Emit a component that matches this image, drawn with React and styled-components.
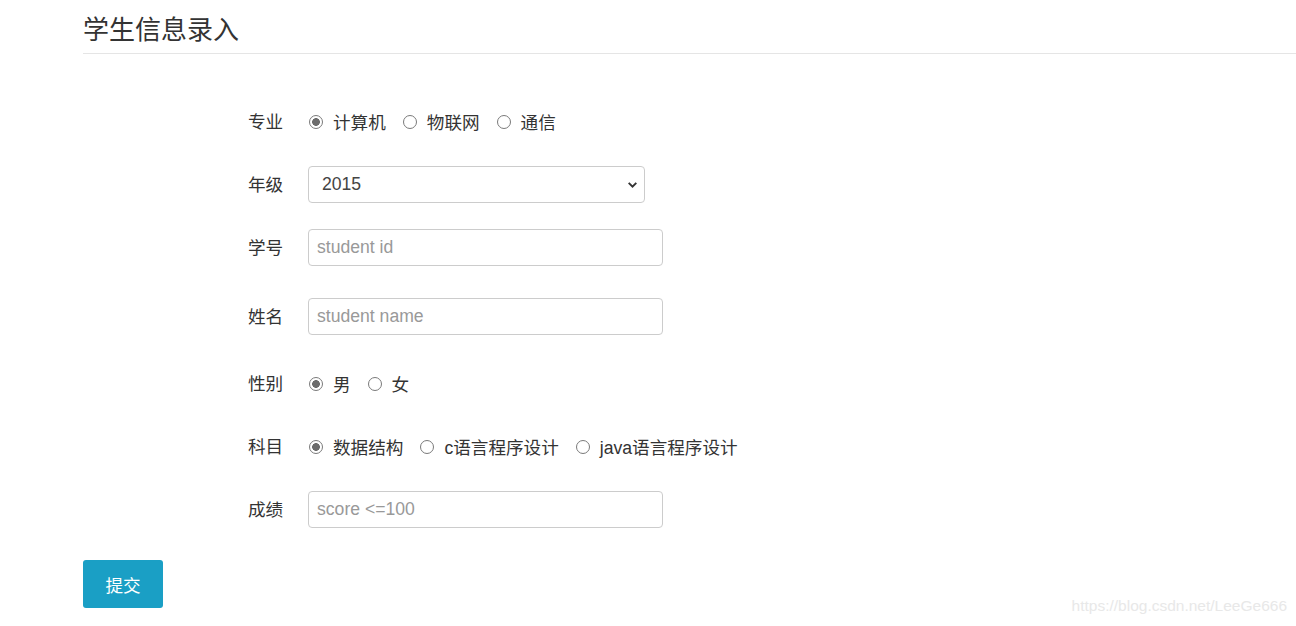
import React from "react";
import styled, {createGlobalStyle} from "styled-components";

const GlobalStyle = createGlobalStyle`
  html, body {
    margin: 0;
    padding: 0;
    background: #fff;
  }
  body {
    font-family: "Liberation Sans", "Noto Sans CJK SC", Arial, sans-serif;
    color: #333;
    font-size: 17.6px;
  }
`;

const rows = [
    {label: "专业", type: "radio", name: "major", options: ["计算机", "物联网", "通信"], gap: 25},
    {label: "年级", type: "select", value: "2015", gap: 25},
    {label: "学号", type: "input", placeholder: "student id", gap: 31},
    {label: "姓名", type: "input", placeholder: "student name", gap: 29},
    {label: "性别", type: "radio", name: "sex", options: ["男", "女"], gap: 25},
    {label: "科目", type: "radio", name: "course", options: ["数据结构", "c语言程序设计", "java语言程序设计"], gap: 25},
    {label: "成绩", type: "input", placeholder: "score <=100", gap: 32},
];

const Field = ({row}) => {
    if (row.type === "radio") {
        return (
            <RadioGroup>
                {row.options.map((opt, i) => (
                    <RadioLabel key={opt}>
                        <Radio type="radio" name={row.name} defaultChecked={i === 0}/>
                        {opt}
                    </RadioLabel>
                ))}
            </RadioGroup>
        );
    }
    if (row.type === "select") {
        return (
            <SelectWrap>
                <Select defaultValue={row.value}>
                    <option>2015</option>
                    <option>2016</option>
                    <option>2017</option>
                    <option>2018</option>
                </Select>
                <Chevron viewBox="0 0 12 12">
                    <path d="M2.5 4.5 L6 8 L9.5 4.5" fill="none" stroke="#333" strokeWidth="1.8"/>
                </Chevron>
            </SelectWrap>
        );
    }
    return <Input placeholder={row.placeholder}/>;
};

const App = () => {
    return (
        <>
            <GlobalStyle/>
            <Page>
                <Title>学生信息录入</Title>
                <Divider/>
                <Form>
                    {rows.map((row) => (
                        <Row key={row.label} $gap={row.gap}>
                            <Label>{row.label}</Label>
                            <Field row={row}/>
                        </Row>
                    ))}
                </Form>
                <Button>提交</Button>
            </Page>
            <Watermark>https://blog.csdn.net/LeeGe666</Watermark>
        </>
    );
};

const Page = styled.div`
  padding-left: 83px;
  height: 626px;
  overflow: hidden;
  box-sizing: border-box;
`;

const Title = styled.h3`
  margin: 0;
  padding-top: 12px;
  font-size: 26px;
  font-weight: 400;
  line-height: 32px;
  color: #333;
  font-family: "Noto Sans CJK SC", sans-serif;
`;

const Divider = styled.div`
  margin-top: 9px;
  height: 1px;
  background: #e5e5e5;
`;

const Form = styled.div`
  padding-left: 165px;
  padding-top: 48px;
`;

const Row = styled.div`
  display: flex;
  align-items: center;
  height: 38px;
  margin-bottom: ${(p) => p.$gap}px;
`;

const Label = styled.div`
  width: 60px;
  flex-shrink: 0;
  color: #333;
  margin-top: -2px;
`;

const RadioGroup = styled.div`
  display: flex;
  align-items: center;
  gap: 16px;
`;

const RadioLabel = styled.label`
  display: flex;
  align-items: center;
  gap: 10px;
  color: #333;
`;

const Radio = styled.input`
  appearance: none;
  flex-shrink: 0;
  margin: 2px 0 0 1px;
  width: 14px;
  height: 14px;
  border: 1px solid #7a7a7a;
  border-radius: 50%;
  box-sizing: border-box;
  background: #fff;

  &:checked {
    background: radial-gradient(circle, #6c6c6c 0 3.6px, #fff 4.1px);
  }
`;

const SelectWrap = styled.div`
  position: relative;
  width: 337px;
`;

const Select = styled.select`
  appearance: none;
  width: 100%;
  height: 37px;
  padding: 0 30px 0 13px;
  border: 1px solid #ccc;
  border-radius: 4px;
  background: #fff;
  color: #444;
  font-family: "Liberation Sans", Arial, sans-serif;
  font-size: 17.6px;
  box-sizing: border-box;
`;

const Chevron = styled.svg`
  position: absolute;
  right: 6px;
  top: 12px;
  width: 13px;
  height: 13px;
  pointer-events: none;
`;

const Input = styled.input`
  width: 355px;
  height: 37px;
  padding: 0 8px;
  border: 1px solid #ccc;
  border-radius: 4px;
  box-sizing: border-box;
  font-family: "Liberation Sans", Arial, sans-serif;
  font-size: 17.6px;
  color: #444;

  &::placeholder {
    color: #999;
  }
`;

const Button = styled.button`
  width: 80px;
  height: 48px;
  border: none;
  border-radius: 3px;
  background: #1a9fc5;
  color: #fff;
  font-size: 17.6px;
  font-family: "Noto Sans CJK SC", sans-serif;
  cursor: pointer;
`;

const Watermark = styled.div`
  position: absolute;
  right: 9px;
  top: 597px;
  font-family: "Liberation Sans", Arial, sans-serif;
  font-size: 15.5px;
  color: #e8e8e8;
`;

export default App;
